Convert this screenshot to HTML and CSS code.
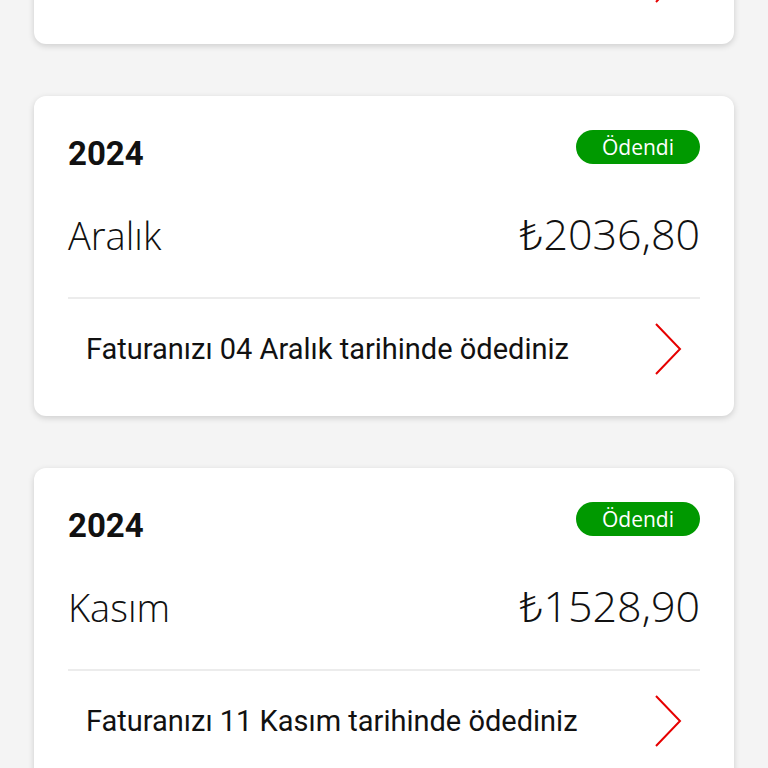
FILE: index.html
```html
<!DOCTYPE html>
<html lang="tr">
<head>
  <meta charset="UTF-8" />
  <meta name="viewport" content="width=device-width, initial-scale=1.0"/>
  <title>Faturalarım</title>
  <link rel="stylesheet" href="styles.css">
</head>
<body>
  <main class="bills">
    <div class="bill">
      <div class="bill-head">
        <span class="year">2025</span>
        <span class="badge">Ödendi</span>
      </div>
      <div class="bill-amount">
        <span class="month">Ocak</span>
        <span class="price">₺1875,40</span>
      </div>
      <div class="bill-foot">
        <span>Faturanızı 03 Ocak tarihinde ödediniz</span>
        <svg class="chevron" viewBox="0 0 28 52"><path d="M2 1 L26 26 L2 51" /></svg>
      </div>
    </div>

    <div class="bill">
      <div class="bill-head">
        <span class="year">2024</span>
        <span class="badge">Ödendi</span>
      </div>
      <div class="bill-amount">
        <span class="month">Aralık</span>
        <span class="price">₺2036,80</span>
      </div>
      <div class="bill-foot">
        <span>Faturanızı 04 Aralık tarihinde ödediniz</span>
        <svg class="chevron" viewBox="0 0 28 52"><path d="M2 1 L26 26 L2 51" /></svg>
      </div>
    </div>

    <div class="bill">
      <div class="bill-head">
        <span class="year">2024</span>
        <span class="badge">Ödendi</span>
      </div>
      <div class="bill-amount">
        <span class="month">Kasım</span>
        <span class="price">₺1528,90</span>
      </div>
      <div class="bill-foot">
        <span>Faturanızı 11 Kasım tarihinde ödediniz</span>
        <svg class="chevron" viewBox="0 0 28 52"><path d="M2 1 L26 26 L2 51" /></svg>
      </div>
    </div>
  </main>
</body>
</html>
```

FILE: styles.css
```css
body {
  margin: 0;
  background: #f4f4f4;
  font-family: 'Roboto', sans-serif;
  color: #111;
}

.bills {
  padding: 0 34px;
  margin-top: -276px;
}

.bill {
  background: #fff;
  border-radius: 12px;
  box-shadow: 0 2px 6px rgba(0,0,0,0.16);
  padding: 34px 34px 0;
  margin-bottom: 52px;
  height: 320px;
  box-sizing: border-box;
}

.bill-head {
  display: flex;
  justify-content: space-between;
  align-items: flex-start;
}

.year {
  font-size: 33px;
  font-weight: 700;
  line-height: 40px;
  margin-top: 4px;
}

.badge {
  background: #009900;
  color: #fff;
  font-family: 'Open Sans', sans-serif;
  font-size: 21px;
  line-height: 34px;
  width: 124px;
  text-align: center;
  border-radius: 17px;
}

.bill-amount {
  display: flex;
  justify-content: space-between;
  align-items: baseline;
  font-family: 'Open Sans', 'Noto Sans', sans-serif;
  font-weight: 300;
  margin-top: 30px;
  padding-bottom: 34px;
  border-bottom: 2px solid #ececec;
}

.month {
  font-size: 38px;
}

.price {
  font-size: 43px;
}

.bill-foot {
  display: flex;
  justify-content: space-between;
  align-items: center;
  height: 118px;
  box-sizing: border-box;
  padding: 0 18px 18px;
  font-size: 29px;
}

.chevron {
  width: 28px;
  height: 52px;
  fill: none;
  stroke: #e60000;
  stroke-width: 2;
}
```
